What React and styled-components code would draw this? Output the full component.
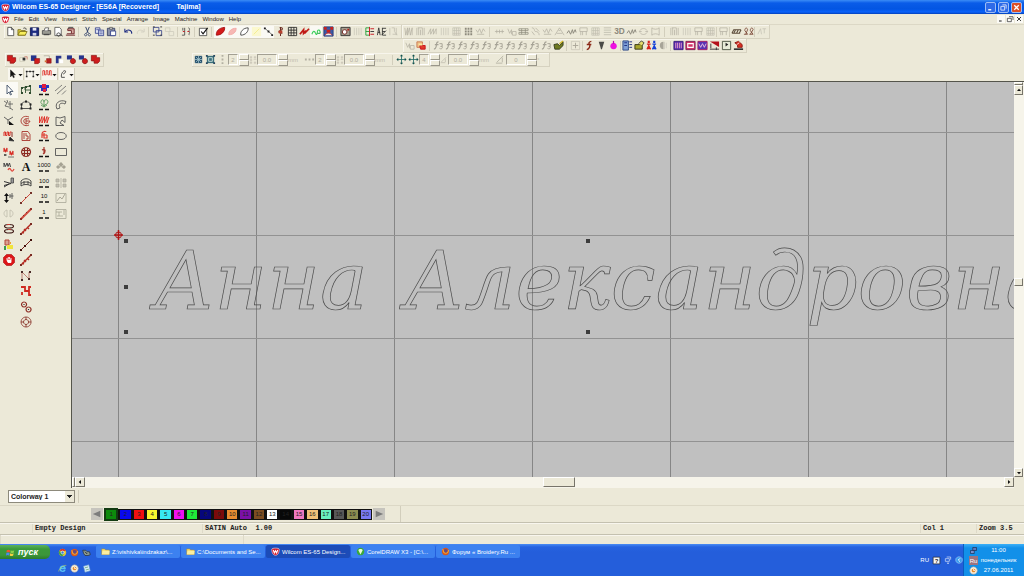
import React from 'react'
import styled, { createGlobalStyle } from 'styled-components'

const GlobalStyle = createGlobalStyle`
    * {
        box-sizing: border-box;
    }
    body {
        margin: 0;
        font-family: "Liberation Sans", sans-serif;
        font-size: 6px;
        color: #222;
    }
    button, input, select {
        font: inherit;
        color: inherit;
        margin: 0;
        padding: 0;
        border: 0;
        background: none;
    }
`

const G = '#b3b0a2'
const D = '#333'
const R = '#c8141c'
const N = '#1c2a80'

// every entry is [path, stroke, fill, stroke width] or { t } for a caption
const art = {
    new: [['M3 1.5h4l2.5 2.500v6.500h-6.500z', D, '#fff', 0.8], ['M7 1.500v2.500h2.500', D, 'none', 0.8]],
    open: [['M1 10V4h3l1 1h4v5z', '#6d6210', '#d9c93a', 0.8], ['M1 10l2-4h8l-2 4z', '#6d6210', '#f7ee5a', 0.8], ['M7 2.500c2-1 3 0 3 1.500', D]],
    save: [['M1.500 2h9v8.500h-9z', '#111a55', '#1c2a80'], ['M4 2h4v3H4z', 'none', '#e8e8f4'], ['M4 7.500h4v3H4z', 'none', '#cfd2e8']],
    print: [['M1.500 5h9v4h-9z', '#555', '#9a9a92'], ['M3.500 5l1-3h4l-1 3', '#444', '#fff', 0.8], ['M3 9.500h6', D]],
    preview: [['M2 1.500h5l2 2v7H2z', '#444', '#fff', 0.8], ['M6 7.500a1.800 1.800 0 1 0 .1 0M8 9l2.500 2', D]],
    machine: [['M1 10h10M2 8.500h8V3H3v2h4v3', '#6b1f24', '#d8a9a0'], ['M4 3V1.500h5', '#444']],
    cut: [['M4 1l3 7M8 1L5 8', '#283a66'], ['M4 8.200a1.300 1.300 0 1 0 .1 0M8 8.200a1.300 1.300 0 1 0 .1 0', '#283a66', 'none', 0.9]],
    copy: [['M1.500 2h5v6h-5z', N, '#dfe3f4', 0.8], ['M5 4.500h5.500v6H5z', N, '#dfe3f4', 0.8], ['M2.500 4h3M6 6.500h3.500M6 8.500h3.500', N, 'none', 0.7]],
    paste: [['M1.500 2.500h8v8h-8z', '#3d4668', '#8a90a8'], ['M4 1.500h3v2H4z', D, '#ddd', 0.6], ['M5 5.500h5.500v5H5z', N, '#fff', 0.8]],
    undo: [['M2 3v3.500h3.500M2.500 6C5 3.500 10 4 9.500 8.500', N, 'none', 1.100]],
    redo: [['M10 3v3.500H6.500M9.500 6C7 3.500 2 4 2.500 8.500', '#d2cfc1']],
    group: [['M1.500 1.500h6v5h-6zM4.500 5h6v5.500h-6z', '#33408a', 'none', 0.9], ['M1 1h2M9 10h2M9 1h2M1 10h2', D]],
    ungroup: [['M1.500 2h5v4h-5zM5.500 6h5v4.500h-5z', '#cfccbd', 'none', 0.9]],
    props: [['M2 2v3M4 2v8M8 2c3 1 0 3 1 4s-1 3 0 4M1 10h3', '#444', 'none', 0.9], ['M2 6h2M7 6h2', R]],
    check: [['M1.500 2.500h8v8h-8z', D, '#fff', 0.8], ['M3.500 6l2 2.500L10.500 2', '#111', 'none', 1.300]],
    leafRed: [['M1.500 10C1 6 4 2 10.500 1.500 11 6 7 10 1.500 10z', '#a30f12', '#d41a1a']],
    leafPink: [['M2 9.500C1.500 6 4.500 2.500 10 2.500 10 6.500 7 9.500 2 9.500z', '#f2a7a4', '#f6b8b4']],
    leafWhite: [['M2 10C1 6.500 4.500 2 10 2c.5 4-3 8-8 8z', D, '#fff', 0.9]],
    yellow: [['M1 1h10v10H1z', 'none', '#fbf8cf'], ['M3 9l6-6', '#f3ec8c']],
    node: [['M2 2.500l8 7', '#444', 'none', 0.8], ['M1 1.500h2v2H1zM5 5h2v2H5zM9 9h2v2H9z', 'none', '#222']],
    needle: [['M5 2c4-1 4 2 1 3s-2 3 2 3M6 1v10', '#6b2a20', 'none', 1.100], ['M4 5h4v3H4z', 'none', '#b9412f']],
    grid: [['M1.500 1.500h9v9h-9zM1.500 4.500h9M1.500 7.500h9M4.500 1.500v9M7.500 1.500v9', '#222', 'none', 0.9]],
    stitchRed: [['M1 9l4-5v4l3-3M6 8l5-5', '#c01a16', 'none', 1.900]],
    green: [['M1 9c1-4 3-4 4-1s2 0 2-2 3-3 3 2', '#3cd05c', 'none', 1.200], ['M7 8h3', '#1f9a3a']],
    photo: [['M1 1h10v10H1z', '#27397a', '#3a5ba8'], ['M1 1h3v3H1zM8 1h3v3H8zM4 4h4v3H4z', 'none', '#c9201c'], ['M2 10c2-3 6-3 8 0', '#c9201c', '#eee']],
    image: [['M1 1.500h10v9H1z', D, '#a49d8e'], ['M5 4a2.500 2.500 0 1 0 .1 0', '#701b18', '#fff'], ['M8 3h2v2H8z', 'none', '#b3201c']],
    bars: [['M2.500 2v8M5 2v8M7.500 2v8M10 2v8', '#cbc8ba', 'none', 0.9]],
    tree: [['M2 2h4M2 6h4M2 10h4M2 2v8', '#28a03a'], ['M6 1v10M7 3h4M7 9h4', R], ['M7 6h4', D]],
    aa: [['M1.500 10L3 2l1.500 8M2 7h2.500M7 2v8M7 2.500h4M7 6h3M6 10l5-5M7 10h4', '#2b2b2b', 'none', 0.9]],
    dim: [['M2 2v8M4 2h3v4M9 2v8M5 9h5M7 6l3 4', '#c4c1b3', 'none', 0.9]],
    h1: [['M2 2l1 8 2-8v8l2-8 1 8 2-8v8', G, 'none', 0.8]],
    h2: [['M2 2v8M4 2v8M6 4v6M8 2v8M10 2v8M3 2h5', G, 'none', 0.8]],
    h3: [['M1 9l3-6v6l3-6v6l3-6v6', G, 'none', 0.8]],
    h4: [['M2 2h8v8H2zM4 2v8M6 2v8M8 2v8M2 5h8M2 8h8', '#c1beb0', 'none', 0.8]],
    h5: [['M2 2h2v2H2zM5 2h2v2H5zM8 2h2v2H8zM2 5h2v2H2zM5 5h2v2H5zM8 5h2v2H8zM2 8h2v2H2zM5 8h2v2H5zM8 8h2v2H8z', 'none', '#8c897c']],
    h6: [['M1 4l2 3 2-4 2 5 2-5 2 3M2 9h8', G, 'none', 0.8]],
    h7: [['M1 6h10M3 4v4M6 4v4M9 4v4', G, 'none', 0.8]],
    h8: [['M2 3l2 5 2-4v5M7 6h4v4H7z', G, 'none', 0.8]],
    h9: [['M1 3h10v2H1zM1 7h10v2H1zM4 3v6M8 3v6', '#8c897c', 'none', 0.8]],
    h10: [['M2 2c4 0 2 4 4 4s4 1 4 4M2 6l3 4M6 2l4 4', G, 'none', 0.8]],
    h11: [['M1 10l5-8 5 8M3 8h6M5 5h2', G, 'none', 0.8]],
    h12: [['M1 8l2-3 2 4 2-5 1 4 2-4 1 3', '#89867a', 'none', 1]],
    h13: [['M2 2h8v4H2zM3 6v4M5 6v4M9 6v4', G, 'none', 0.8]],
    h14: [['M2 2h8M2 4.500h8M2 7h8M2 9.500h8', G, 'none', 0.7]],
    h15: [['M2 5c2-3 6-3 8 0M2 7c2 3 6 3 8 0M1 6h3M8 6h3', G, 'none', 0.8]],
    h16: [['M2 2c2 2 6 2 8 0v8c-2-2-6-2-8 0z', G, 'none', 0.8]],
    threeD: [{ t: '3D', size: 9, fill: '#8c897c', bold: true }],
    loops: [['M1 8l2-4h8M3 8l2-4M6 8l2-4M9 8l2-4M1 8h9', '#5b4b3a', 'none', 1.100]],
    loops2: [['M1 9h4L2 5c0-4 3-3 3-1L3 9M7 9h4L8 5c0-4 3-3 3-1L8 9', '#76402f', 'none', 0.9]],
    ramp: [['M2 9l3-6 1 6M7 3h4M9 3v5', '#c4c1b3', 'none', 0.8]],
    tag: [['M1 2h6v6H1z', '#cb7a4e', '#f0c38c'], ['M4 6h6v4H5z', R, '#e23a2a'], ['M3 4h4v2H3z', 'none', '#fbeea0']],
    f: [['M6 2C3 2 4 5 3.500 7S3 10 1 10M2 5h4', '#a5a295', 'none', 1.200], ['M7 4h3v3H8M10 7c1 3-2 3-3 2', '#a5a295', 'none', 1]],
    brush: [['M1 5l4-1 2 2 4-4v4l-4 4H2z', '#2c3318', '#6f7a22', 0.9], ['M7 4l4-3', '#d2b820', 'none', 1.300]],
    frame: [['M1.500 1.500h9v9h-9z', '#c4c1b3', 'none', 0.7], ['M3 6h6M6 3v6', '#aaa698']],
    fRed: [['M8 1.500C5 2 5 4 6 5s0 5-3 5.500M3 5h5', '#8b2a18', 'none', 1.600]],
    down: [['M3 2h6L6.500 10h-1z', 'none', '#4a4a46']],
    bomb: [['M6 3a3.600 3.600 0 1 0 .1 0', 'none', '#ee12e0'], ['M6 1v3', '#b010a8', 'none', 1.300]],
    list: [['M1 1h6v10H1z', '#2f4a86', '#7ea0d6'], ['M8 2h3M8 5h3M8 8h3M2.500 3h3M2.500 6h3', N]],
    olive: [['M1 5h8v5H1z', '#34330f', '#a8a52c'], ['M5 4l3-3 3 2-2 3', D, '#e6dd6a', 0.9]],
    people: [['M1 10l2-4 2 4M1 4.500h4M3 4v3M2.500 1.500h1v1h-1z', '#d8201c', '#d8201c', 1.300], ['M7 10l2-4 2 4M7 4.500h4M9 4v3M8.500 1.500h1v1h-1z', '#1440d8', '#1440d8', 1.300]],
    half: [['M6 2a4 4 0 0 0 0 8z', 'none', '#a7a497'], ['M7 2v8M9 3v6', '#cfccbd']],
    hoopA: [['M1 1.500h10v9H1z', '#3a1f7c', '#5b2ab0'], ['M3 3v6M5 3v6M7 3v6M9 3v6', '#e9a2c6']],
    hoopB: [['M1 1.500h10v9H1z', '#7c1f54', '#d13468'], ['M3 4h6v4H3z', '#fff', 'none', 1.200]],
    hoopC: [['M1 1.500h10v9H1z', '#a61e64', '#5a34b4'], ['M2 4l2 4 2-4 2 4 2-4', '#e9c3e0']],
    corner: [['M1 1.500h10v6z', 'none', '#b5111a'], ['M1 10h10M2 4v5M8 8v3', D]],
    play: [['M1.500 1.500h9v9h-9z', '#3c4434', '#e8ecd8', 0.9], ['M5 3l3 2-3 2z', 'none', '#222']],
    emb: [['M2 3l4-1.500L10 5v3H5V5.500z', '#8c1612', '#d83022'], ['M4 5l3-2', '#fff', 'none', 0.8], ['M1 10h10', D, 'none', 1.800]],
    weldR: [['M1.500 1.500h5.500v2.500h3.500v4l-2 2h-4v-2.500h-3z', '#8e1010', '#cf1d1d', 0.8]],
    weldS: [['M2 4h5v4H2z', '#bdb9a6', '#f4f1e2', 0.6], ['M5 4h3v3H5z', 'none', '#333'], ['M7 3h3v3', '#c05a4a', 'none', 0.7]],
    weldB: [['M1 1.500h6v6H1z', 'none', '#26348c'], ['M5 5h5.500v4l-1.500 1.500H5z', '#871212', '#cf1d1d', 0.6]],
    weldE: [['M2 2h6v6', '#9a9586', '#f5f1e4', 0.7], ['M5 5h5v5H5z', '#871212', '#b52020', 0.6], ['M3 7h2v2H3z', 'none', '#d96a30']],
    weldC: [['M2 2h6v3H5v5H2z', 'none', '#26348c'], ['M6 6h4v4H6z', 'none', '#fff']],
    weldF: [['M1 1.500h5.500v4.500H1z', 'none', '#26348c'], ['M7.500 5a2.800 2.800 0 1 0 .1 0', '#871212', '#cf1d1d', 0.8]],
    snap: [['M2 2h8v8H2z', 'none', '#2b5570'], ['M2 6h8M6 2v8M3 3l6 6M9 3L3 9', '#a7c8d0', 'none', 0.8]],
    snap2: [['M2 2h8v8H2z', 'none', '#3a6f7a'], ['M4 4h4v4H4z', '#d9e8e4', 'none', 0.9], ['M1 1h2v2H1zM9 9h2v2H9zM9 1h2v2H9zM1 9h2v2H1z', 'none', '#25445e']],
    move: [['M6 2v8M2 6h8', '#1f6a66', 'none', 0.9], ['M6 .5l1.800 2H4.200zM6 11.500l1.800-2H4.200zM.5 6l2-1.800v3.600zM11.500 6l-2-1.800v3.600z', 'none', '#14504e']],
    dotsV: [['M5 1h2v2H5zM5 5h2v2H5zM5 9h2v2H5z', 'none', '#b3b0a2']],
    dotsH: [['M1 5h2v2H1zM5 5h2v2H5zM9 5h2v2H9z', 'none', '#b3b0a2']],
    dotsX: [['M2 1h2v2H2zM8 1h2v2H8zM2 5h2v2H2zM7 5h4M2 9h2v2H2zM8 9h2v2H8z', '#b3b0a2', 'none', 0.7]],
    angle: [['M1 10h7M2 9l7-7M8 4v5', '#b3b0a2', 'none', 0.9]],
    arrow: [['M3 1v8.500l2-2 1.500 3 1.200-.6L6.300 7H9z', '#111', '#111', 0.5]],
    nodes: [['M2 9V3h8v6', '#444', 'none', 0.8], ['M1 2h2v2H1zM5 2h2v2H5zM9 2h2v2H9zM1 8h2v2H1zM9 8h2v2H9z', 'none', '#222']],
    coil: [['M1 8V2h2v5h2V2h2v5h2V2h2v6', '#de3a32', 'none', 1.100]],
    pen: [['M3 10c-1-4 2-8 4-8s0 4-2 4M3 10h4', '#333', 'none', 1]],
    // design tools
    select: [['M4 1v9l2-2 1.500 3 1-.5L7 7.500h3z', '#44546a', '#fff', 0.9]],
    lasso: [['M1 2l3 2-2 3 4 1M7 2v8M5 5h5M7 9l3 2M4 1l1 3', '#555', 'none', 0.8]],
    split: [['M1 2l4 3 5-3M5 5v4', '#555', 'none', 0.9], ['M6 6l5 4H6z', 'none', '#111']],
    stitchSel: [['M1 6V2h1.500v3.500H4V2h1.500v3.500H7V2h1.500', '#d83028', 'none', 1], ['M7 7l1 1 3 3-5-.5z', D, '#222', 0.8], ['M9 2v5', '#8a2a22']],
    wv: [['M1 6V2l1.500 3.500L4 2v4M7 9V5l1.500 3.500L10 5v4', '#d83028', 'none', 1.100], ['M1 9h3M5 11h6', '#555', 'none', 0.8], ['M2 8v2', '#111']],
    wAbc: [['M1 6V2l1.500 3.500L4 2l1 3.500L6.500 2 7.500 6', '#444', 'none', 1], ['M5 9c1-2 2-2 3 0s2 1 3-1', '#e0483c', 'none', 1.300]],
    spray: [['M1 8.500l7-2-7-2M1 10l5-3', D, 'none', 1], ['M8 1h2.500v5H8z', '#444', '#999', 0.8]],
    swap: [['M3.500 2v8', '#111', 'none', 1.400], ['M1 4l2.500-3L6 4zM1 8l2.500 3L6 8z', 'none', '#111'], ['M7 2v4M9 1v6M6.500 4h4', '#555', 'none', 0.9]],
    mirror: [['M4 2C0 3 0 8 4 9zM7 2c4 1 4 6 0 7z', '#c3c0b0', 'none', 0.9]],
    rings: [['M6 1.500c6 0 6 3.500 0 3.500s-6-3.500 0-3.500M6 6.500c6 0 6 3.500 0 3.500s-6-3.500 0-3.500', '#3b1512', 'none', 1.100], ['M4 1.500l3 0M5 6.500h3', '#c03a30', 'none', 1]],
    fig: [['M2 1h4v5H2z', '#b5443a', '#d9a090'], ['M4 6h6v4H4z', 'none', '#f0e43a'], ['M1 7h2v4H1z', 'none', '#3c9a4c'], ['M7 3h1v2H7z', 'none', '#f0a030']],
    stop: [['M3.500 .5h5l3 3v5l-3 3h-5l-3-3v-5z', '#a80d10', '#dd1518', 0.6], ['M4 6V4M5.300 5V3M6.600 5V3M8 6V4M4 6h4v2.500H5z', '#fff', '#fff', 0.9]],
    reshapeA: [['M1.500 9V4l4-1v6M5.500 6h5V2L5 3v3M10.500 6v4', '#345534', 'none', 0.9], ['M1 3h2v2H1zM5 2h2v2H5zM9 1h2v2H9zM1 8h2v2H1zM9 8h2v2H9z', 'none', '#2d4a2d']],
    reshapeB: [['M1.500 9.500V5C3 2 9 2 10.500 5v4.500z', '#444', 'none', 0.9], ['M.5 4.500h2v2h-2zM5 1.500h2v2H5zM9.500 4.500h2v2h-2zM.5 8.500h2v2h-2zM9.500 8.500h2v2h-2z', 'none', '#222']],
    spiral: [['M9 2C4 0 1 3 1 6s4 6 8 4M9 4c-3-1-6 0-5 3s5 2 6-1H6M6 4v5', '#a8342c', 'none', 0.9]],
    colB: [['M2 1.500h6l2 3v6H2zM4 3v6M6 3v3h2v3H6', '#a8342c', 'none', 0.9]],
    globe: [['M6 1.500a4.500 4.500 0 1 0 .1 0M1.500 4.500h9M1.500 7.500h9M4.500 2v8M7.500 2v8', '#8c2a22', 'none', 1.200]],
    letter: [{ t: 'A', size: 12, fill: '#111', bold: true, serif: true, y: 10 }],
    bridge: [['M1 9V4c3-3 7-3 10 0v5M1 6.500c3-2 7-2 10 0M1 9c3-2 7-2 10 0M4 4v4M8 4v4', '#3a3a3a', 'none', 0.9]],
    run1: [['M1 11L11 1', '#cf4a3e', 'none', 1], ['M0 10h2v2H0zM5 5h1v1H5zM10 0h2v2h-2z', 'none', '#743028']],
    run2: [['M1 11L11 1', '#cf4a3e', 'none', 1.900], ['M0 10h2v2H0zM3 7h1v1H3zM6 4h1v1H6zM10 0h2v2h-2z', 'none', '#8a3028']],
    run3: [['M1 11L11 1M2 9l2 1M4 6l2 2M7 4l2 2', '#b3281f', 'none', 1.400], ['M0 10h2v2H0zM10 0h2v2h-2z', 'none', '#7a2a22']],
    run4: [['M1 11L11 1', '#7a241c', 'none', 1], ['M0 10h2v2H0zM4 6h2v2H4zM10 0h2v2h-2z', 'none', '#43100c']],
    nA: [['M2 10V2l7 7V2', '#b5665c', 'none', 0.8], ['M1 1h2v2H1zM1 9h2v2H1zM8 8h2v2H8zM9 1h2v2H9z', 'none', '#4a2a26']],
    nB: [['M1 2h4v4h4V2h2M2 10V7M9 6v4h2', '#cf2a20', 'none', 1.800]],
    gears: [['M4 1a2.500 2.500 0 1 0 .1 0M8.500 6a2.500 2.500 0 1 0 .1 0', '#8c2a22', 'none', 1.200], ['M4 3v1M8.500 8v1', '#333', 'none', 1.200]],
    target: [['M6 1a5 5 0 1 0 .1 0M6 3.500a2.500 2.500 0 1 0 .1 0M6 1v3M6 8v3M1 6h3M8 6h3', '#8c3a30', 'none', 0.9]],
    flower: [['M1 1h3v3H1zM8 1h3v3H8z', 'none', '#1c3cc8'], ['M4 0h4v4H4z', 'none', '#e01c3c'], ['M3 4h6v3H3z', 'none', '#3c2ab8'], ['M5 5h3v3H5z', 'none', '#e0263c'], ['M1 10.500h4M7 10.500h4', '#111', 'none', 1.500]],
    flowerG: [['M3 3c0-3 3-3 3 0 0-3 4-3 4 0s-4 2-4 4c0-2-4-2-3-4zM6 3v5M3 6l3 2 3-2', '#5a9a5c', 'none', 0.9], ['M1 10.500h4M7 10.500h4', '#111', 'none', 1.500]],
    coilB: [['M1.500 8V1.500M4 8V1.500M6.500 8V1.500M9 8V1.500M1.500 8L4 1.500M4 8l2.500-6.500M6.500 8L9 1.500M9 8l2-6', '#de2a22', 'none', 0.9], ['M1 10.500h4M7 10.500h4', '#111', 'none', 1.500]],
    redS: [['M4 8V4c0-3 4-3 4-2M4 5h5M6 3v5h3V5', '#dc3a30', 'none', 1.200], ['M1 10.500h4M7 10.500h4', '#111', 'none', 1.500]],
    thread: [['M6 1v7M4 4c4-2 4 2 1 4', '#a8342c', 'none', 1.200], ['M1 10.500h4M7 10.500h4', '#111', 'none', 1.500]],
    n1000: [{ t: '1000', size: 6, fill: '#111', y: 6 }, ['M1 10h4M7 10h4', '#111', 'none', 1.500]],
    n100: [{ t: '100', size: 6, fill: '#111', y: 6 }, ['M1 10h4M7 10h4', '#111', 'none', 1.500]],
    n10: [{ t: '10', size: 6, fill: '#111', y: 6 }, ['M1 10h4M7 10h4', '#111', 'none', 1.500]],
    n1: [{ t: '1', size: 6, fill: '#111', y: 6 }, ['M1 10h4M7 10h4', '#111', 'none', 1.500]],
    lines: [['M0 7l7-6M2 10l9-8M7 10.500l4-4', '#666', 'none', 0.8]],
    arc: [['M2 10C-1 4 5 0 11 2.500L10 5C6 3 3 5 5 9z', '#555', 'none', 0.9]],
    poly: [['M1 2l4 1 5-1.500v6L7 5 5 8l4 2.500H1z', '#555', 'none', 0.9]],
    ellipse: [['M6 2.500c7 0 7 7 0 7s-7-7 0-7', '#555', 'none', 0.9]],
    rect: [['M.5 2.500h11v7H.5z', '#555', 'none', 0.9]],
    club: [['M6 1l2.500 2.500L6 6 3.500 3.500zM3 4l2.500 2L3 8 1 6zM9 4l2 2-2 2-2.500-2z', 'none', '#a5a293'], ['M2 10h8', '#b5b2a4']],
    dist: [['M1 2h3v3H1zM8 2h3v3H8zM1 7h3v3H1zM8 7h3v3H8zM6 1v10', '#aaa798', '#c4c1b3', 0.7]],
    wave: [['M1 1.500h10v9H1z', '#aaa798', 'none', 0.8], ['M2 9l3-4 2 2 3-5', '#aaa798', 'none', 1]],
    maze: [['M1 1.500h10v9H1zM1 4h6M4 4v4h4M9 2v5M2 8h2', '#aaa798', 'none', 0.8]],
    // shell icons
    logo: [['M1 3c0-2 10-2 10 0 0 5-2 8-5 8S1 8 1 3z', '#fff', '#d8182a', 0.7], ['M3 4l1.500 4L6 5l1.500 3L9 4', '#fff', 'none', 1.400]],
    flag: [['M1 3c2-1 3-1 4.500 0L5 6C3.500 5 2 5 .6 6z', 'none', '#f0562a'], ['M6.300 3C8 4 9 4 11 3l-.6 3C9 7 7.500 7 5.800 6z', 'none', '#8cd04a'], ['M.5 6.800c1.500-1 3-1 4.300 0L4 10C3 9 1.500 9 0 10z', 'none', '#4a8af0'], ['M5.600 7c1.600 1 3 1 4.700 0l-.8 3C8 11 6.500 11 4.900 10z', 'none', '#f8d040']],
    chrome: [['M6 1a5 5 0 1 0 .1 0', 'none', '#e4c430'], ['M1.700 3.500A5 5 0 0 1 10.500 4H6z', 'none', '#d8352a'], ['M1.500 4A5 5 0 0 0 6 11l2-4-3-1z', 'none', '#3fa04a'], ['M6 4a2 2 0 1 0 .1 0', '#fff', '#3a78d8', 0.9]],
    firefox: [['M6 1a5 5 0 1 0 .1 0', 'none', '#d8561c'], ['M6 2.500a3 3 0 1 0 .1 0', 'none', '#6a4a7a'], ['M2 3c2 1 0 4 3 5s5-1 5-4', '#f4a030', 'none', 1.500]],
    bird: [['M1 3h4l2 2h3l1 4-3 1H4L2 7z', '#2a333c', '#8b9a92'], ['M4 5l3 3', '#222', 'none', 1.200]],
    ie: [['M9.500 8C7 11 2.500 10 3 6s6-4 6.500 0H3.500', '#56c0f4', 'none', 1.700], ['M1 10C1 6 8 1 11 2', '#cfe04a', 'none', 0.8]],
    clock: [['M6 1a5 5 0 1 0 .1 0', '#9aa0a4', '#f6eedc', 0.8], ['M6 3.500a2.500 2.500 0 1 0 .1 0', 'none', '#e88a28'], ['M6 4v2h2', '#fff', 'none', 1]],
    desktop: [['M2 3l7-2 2 8-7 2z', '#6c9ccc', '#d8ecfa', 0.8], ['M4 5l4-1M5 8l4-1', '#58a068', 'none', 1]],
    folder: [['M1 10V2.500h4l1 1.500h5v6z', '#b48a28', '#f6dc6a', 0.7], ['M1 10l1-5h9.500l-.5 5z', 'none', '#fbeea0']],
    corel: [['M6 1a5 5 0 1 0 .1 0', 'none', '#39a838'], ['M6 10L3 4c1-2 5-2 6 0z', 'none', '#e8f8d8']],
    help: [['M1.500 1.500h9v9h-9z', '#222', '#f6f6f6', 0.9], { t: '?', size: 8, fill: '#222', bold: true }],
    restoreS: [['M4 1.500h6v4M2 4h6v4H2z', '#dfe9fb', 'none', 1], ['M4 10h4l-2 2z', 'none', '#fff']],
    chevron: [['M6 1a5 5 0 1 0 .1 0', '#bfe0fb', '#3c9cf0', 0.7], ['M7.500 3.500L5 6l2.500 2.500', '#fff', 'none', 1.400]],
    net: [['M5 2h5v4H5z', '#182040', '#5a78c0', 0.8], ['M2 6h5v4H2z', '#182040', '#7a90d0', 0.8]],
    ru: [['M0 0h12v12H0z', 'none', '#9d7480'], { t: 'Ru', size: 8, fill: '#fff' }],
    min: [['M3 9h4', '#fff', 'none', 1.800]],
    restore: [['M4.500 2.500h5v5M2.500 4.500h5v5h-5z', '#e9effd', 'none', 1.100]],
    close: [['M3 3l6 6M9 3L3 9', '#fff', 'none', 1.700]],
    minD: [['M3 9h4', '#222', 'none', 1.500]],
    restoreD: [['M4.500 2.500h6v5M2 5h6v5H2z', '#333', 'none', 1.100]],
    closeD: [['M3 3l6 6M9 3L3 9', '#222', 'none', 1.300]],
    triL: [['M7.500 3v6L4 6z', 'none', '#111']],
    triR: [['M4.500 3v6L8 6z', 'none', '#111']],
    triU: [['M3 7.500h6L6 4z', 'none', '#111']],
    triD: [['M3 4.500h6L6 8z', 'none', '#111']],
    drop: [['M1 5h10L6 10z', 'none', '#111']],
    prev: [['M10 2v8L1 6z', 'none', '#7c7c7c']],
    next: [['M2 2v8l9-4z', 'none', '#7c7c7c']],
}

const Svg = styled.svg`
    display: block;
    flex: none;
    overflow: visible;
    width: ${p => p.$size}px;
    height: ${p => p.$size}px;
`

const Glyph = ({ name, size = 11 }) => (
    <Svg viewBox="0 0 12 12" $size={size} aria-hidden="true">
        {art[name].map((a, i) => a.t
            ? <text key={i} x="6" y={a.y || 9} textAnchor="middle" fontSize={a.size} fill={a.fill}
                fontWeight={a.bold ? 700 : 400} fontFamily={a.serif ? 'Liberation Serif, serif' : 'Liberation Sans, sans-serif'}>{a.t}</text>
            : <path key={i} d={a[0]} stroke={a[1]} fill={a[2] || 'none'} strokeWidth={a[3] || 1} />)}
    </Svg>
)

const Page = styled.div`
    display: flex;
    flex-direction: column;
    height: 100vh;
    overflow: hidden;
    background: #ece9d8;
`

const TitleBar = styled.header`
    display: flex;
    align-items: center;
    gap: 2px;
    height: 14px;
    padding: 0 2px 0 1px;
    background: linear-gradient(#3b8cf6 0, #0a5ce8 3px, #0355e2 9px, #0a62fb 12px, #0440b8 14px);
    color: #fff;
`

const Title = styled.h1`
    flex: 1;
    margin: 0;
    font-size: 7px;
    line-height: 10px;
    white-space: pre;
`

const WinButton = styled.button`
    display: grid;
    place-items: center;
    width: 11px;
    height: 11px;
    border: 1px solid #9dbdf5;
    border-radius: 2px;
    background: ${p => (p.$close ? '#dd4f26' : '#2f6be8')};
`

const MenuBar = styled.nav`
    display: flex;
    align-items: center;
    height: 11px;
    padding: 0 1px;
    border-bottom: 1px solid #dcd8c6;
`

const Menus = styled.div`
    display: flex;
    gap: 5px;
    padding-left: 4px;
`

const MenuItem = styled.button`
    line-height: 8px;
`

const MdiButtons = styled.div`
    display: flex;
    gap: 1px;
    margin-left: auto;

    button {
        background: #fbfaf5;
    }
`

const Row = styled.div`
    display: flex;
    align-items: center;
    height: ${p => p.$h}px;
    padding-left: ${p => p.$left || 4}px;
    gap: ${p => p.$gap || 0}px;
`

const Band = styled.div`
    display: flex;
    align-items: center;
    height: 14px;
    padding-right: 2px;
    border: solid #d6d2c0;
    border-width: 0 1px 1px 0;
    box-shadow: inset 1px 1px #f7f5ec;
`

const Tool = styled.button`
    display: grid;
    place-items: center;
    width: 12px;
    height: 12px;
    background: ${p => (p.$on ? '#faf9f4' : 'none')};
`

const Sep = styled.span`
    width: ${p => p.$w}px;
    height: 10px;
    background: linear-gradient(#d2cebc, #d2cebc) center / 1px 100% no-repeat;
`

const DropTool = styled.button`
    display: flex;
    align-items: center;
    justify-content: center;
    width: 16px;
    height: 12px;
    margin-right: 1px;
    border-right: 1px solid #d2cebc;
    background: #f8f6ee;
`

const Field = styled.input`
    width: ${p => p.$w}px;
    height: 11px;
    border: 1px solid #a3a093;
    border-right-color: #fff;
    border-bottom-color: #fff;
    color: #b0ad9f;
    text-align: center;
`

const Spin = styled.span`
    display: grid;
    grid-template-rows: 1fr 1fr;
    width: 10px;
    height: 12px;
    margin-left: 1px;

    button {
        border: 1px solid #fff;
        border-right-color: #9a978a;
        border-bottom-color: #9a978a;
    }
`

const Unit = styled.span`
    width: ${p => p.$w}px;
    color: #bdbaac;
    line-height: 8px;
`

const Work = styled.main`
    display: flex;
    flex: 1;
    min-height: 0;
`

const Palette = styled.aside`
    width: 71px;
    flex: none;
    padding: 1px 1px 0 0;
`

const PaletteGrid = styled.div`
    display: grid;
    grid-auto-flow: column;
    grid-template-columns: repeat(4, 1fr);
    grid-template-rows: repeat(16, 1fr);
    height: 248px;
`

const PaletteTool = styled.button`
    display: grid;
    place-items: center;
    background: ${p => (p.$on ? '#fbfaf5' : 'none')};
`

const Stage = styled.section`
    display: grid;
    grid-template-columns: 1fr 10px;
    grid-template-rows: 1fr 11px;
    flex: 1;
    min-width: 0;
    border-top: 1px solid #55554c;
    border-left: 1px solid #55554c;
`

const Canvas = styled.svg`
    display: block;
    width: 100%;
    height: 100%;
    min-width: 0;
    min-height: 0;
    background: #c0c0c0;
    overflow: hidden;
`

const Lettering = styled.text`
    font-family: "DejaVu Serif", serif;
    font-style: italic;
    font-size: 80px;
    fill: none;
    stroke: #4c4c4c;
    stroke-width: 0.7px;
`

const Track = styled.div`
    display: flex;
    flex-direction: ${p => (p.$vertical ? 'column' : 'row')};
    background: #f6f4ea;
`

const Raised = styled.button`
    display: grid;
    place-items: center;
    width: ${p => p.$w}px;
    height: ${p => p.$h}px;
    border: 1px solid #fff;
    border-right-color: #77746a;
    border-bottom-color: #77746a;
    background: #ece9d8;
`

const Room = styled.span`
    flex: ${p => p.$grow};
`

const ColorwayRow = styled.div`
    display: flex;
    align-items: center;
    height: 18px;
    padding-left: 8px;
    border-bottom: 1px solid #dcd8c6;
`

const ColorwayBox = styled.div`
    padding-right: 3px;
    border-right: 1px solid #d2cebc;
`

const Select = styled.select`
    display: block;
    width: 67px;
    height: 13px;
    padding-left: 2px;
    appearance: none;
    border: 1px solid #8d8a7c;
    font-size: 7px;
    font-weight: 700;
    background:
        conic-gradient(from -45deg at 50% 100%, #222 90deg, transparent 0) right 2px center / 5px 3px no-repeat,
        linear-gradient(#ece9d8, #ece9d8) right / 9px 100% no-repeat,
        #fff;
`

const ColorBar = styled.div`
    display: flex;
    align-items: center;
    width: 401px;
    height: 16px;
    padding-left: 91px;
    gap: 1px;
    border-right: 1px solid #d2cebc;
`

const Arrow = styled.button`
    display: grid;
    place-items: center;
    width: 12px;
    height: 12px;
    background: #c6c4bd;
`

const Chips = styled.div`
    display: flex;
    align-items: center;
    width: 268px;
`

const Chip = styled.button`
    flex: 1;
    height: ${p => (p.$active ? 13 : 11)}px;
    border: 1px solid #111;
    border-width: ${p => (p.$active ? '2px' : '1px 1px 1px 2px')};
    border-color: ${p => (p.$active ? '#123c12' : '#111')};
    background: ${p => p.$color};
    line-height: 8px;
    text-align: center;
`

const Status = styled.div`
    display: flex;
    align-items: center;
    height: ${p => p.$h}px;
    border-top: 1px solid #c4c1b0;
    box-shadow: inset 0 1px #f8f6ee;
    font-family: "Liberation Mono", monospace;
    font-size: 7px;
    font-weight: 700;
    line-height: 9px;
    white-space: pre;
`

const StatusCell = styled.span`
    flex: ${p => (p.$w ? 'none' : 1)};
    width: ${p => (p.$w ? p.$w + 'px' : 'auto')};
    padding-left: 2px;
    border-left: 1px solid #dedac9;
`

const Taskbar = styled.footer`
    display: flex;
    height: 32px;
    background: linear-gradient(#4a8cf4 0, #2663e0 3px, #245edb 8px);
    color: #fff;
`

const Start = styled.button`
    display: flex;
    align-items: center;
    gap: 3px;
    width: 50px;
    height: 14px;
    margin-top: 1px;
    padding-left: 6px;
    border-radius: 0 5px 5px 0;
    background: linear-gradient(#5eb15e, #3a9a3a 4px, #3c963a 10px, #2c7a2c);
    font-size: 9px;
    font-style: italic;
    font-weight: 700;
    color: #fff;
`

const Quick = styled.div`
    display: grid;
    grid-template-columns: repeat(3, 12px);
    place-items: center;
    height: 32px;
    margin: 0 4px 0 6px;
`

const Task = styled.button`
    display: flex;
    align-items: center;
    gap: 2px;
    flex: 0 1 84px;
    height: 13px;
    margin: 1px 1px 0 0;
    padding-left: 5px;
    border-radius: 2px;
    background: ${p => (p.$active ? '#1c4cb8' : '#3c81f0')};
    white-space: nowrap;
`

const TrayLeft = styled.div`
    display: flex;
    align-items: center;
    gap: 3px;
    margin-left: auto;
`

const Tray = styled.div`
    display: grid;
    grid-template-columns: 12px 1fr;
    grid-template-rows: repeat(3, 10px);
    place-items: center;
    width: 61px;
    padding: 1px 6px 0 3px;
    border-left: 1px solid #0b5cc0;
    background: linear-gradient(#3cb0f8, #1290e9 4px);
    line-height: 8px;
`

const row1 = [
    'new', 'open', 'save', 'print', 'preview', 'machine', 5, 'cut', 'copy', 'paste', 5, 'undo', 'redo', 5,
    'group', 'ungroup', 5, 'props', 5, 'check', 5, 'leafRed*', 'leafPink*', 'leafWhite*', 'yellow*', 'node*',
    'needle', 'grid', 'stitchRed', 'green*', 'photo', 5, 'image', 'bars', 'tree', 'aa', 'dim',
]
const row1b = [
    'h1', 'h2', 'h3', 'bars', 'h4', 'h5', 'h6', 7, 'h7', 'h8', 'h9', 'h10', 'h6', 'h11', 'h12', 'h13', 'h4',
    'h14', 'threeD', 'h12', 'h15', 'h16', 7, 'h2', 'bars', 'h13', 'h4', 1, 'h13', 1, 'loops', 'loops2', 1, 'ramp',
]
const row2 = [
    'h8', 'tag', 5, 'f', 'f', 'f', 'f', 'f', 'f', 'f', 'f', 'f', 'f', 'brush', 5, 'frame', 2, 'fRed', 'down', 'bomb', 2,
    'list', 'olive', 'people', 'half', 3, 'hoopA', 'hoopB', 'hoopC', 'corner', 'play', 'emb',
]
const row3 = ['weldR', 'weldS', 'weldB', 'weldE', 'weldC', 'weldF', 'weldF', 'weldR']

const palette = [
    ['select', 'lasso', 'split', 'stitchSel', 'wv', 'wAbc', 'spray', 'swap', 'mirror', 'rings', 'fig', 'stop'],
    ['reshapeA', 'reshapeB', 'spiral', 'colB', 'globe', 'letter', 'bridge', 'run1', 'run2', 'run3', 'run4', 'run3', 'nA', 'nB', 'gears', 'target'],
    ['flower', 'flowerG', 'coilB', 'redS', 'thread', 'n1000', 'n100', 'n10', 'n1'],
    ['lines', 'arc', 'poly', 'ellipse', 'rect', 'club', 'dist', 'wave', 'maze'],
]

const chips = [
    '#0c8a0c', '#0808f0', '#f01010', '#f8f830', '#38e8f0', '#f010f0', '#20e838', '#06067c', '#7c0a0a', '#e88c30',
    '#7a10a8', '#7c4c20', '#ffffff', '#080808', '#f078c0', '#f0c078', '#68f0c0', '#585858', '#8c8c50', '#7878f0',
]

const menus = ['File', 'Edit', 'View', 'Insert', 'Stitch', 'Special', 'Arrange', 'Image', 'Machine', 'Window', 'Help']

const Tools = ({ items }) => items.map((item, i) => {
    if (typeof item === 'number') return <Sep key={i} $w={item} />
    const name = item.replace('*', '')
    return <Tool key={i} type="button" aria-label={name} $on={item !== name}><Glyph name={name} /></Tool>
})

const Stepper = ({ label, value, w }) => (
    <>
        <Field aria-label={label} defaultValue={value} $w={w} />
        <Spin>
            <button type="button" aria-label={label + ' up'} />
            <button type="button" aria-label={label + ' down'} />
        </Spin>
    </>
)

const gridX = Array.from({ length: 16 }, (_, i) => 46.5 + i * 138)
const gridY = Array.from({ length: 12 }, (_, i) => 50.5 + i * 103)
const handles = [[54, 159], [54, 205], [54, 250], [516, 159], [516, 250]]

const App = () => {
    return (
        <>
            <GlobalStyle />
            <Page>
                <TitleBar>
                    <Glyph name="logo" size={9} />
                    <Title>{'Wilcom ES-65 Designer - [ES6A [Recovered]         Tajima]'}</Title>
                    <WinButton type="button" aria-label="Minimize"><Glyph name="min" size={9} /></WinButton>
                    <WinButton type="button" aria-label="Restore"><Glyph name="restore" size={9} /></WinButton>
                    <WinButton type="button" aria-label="Close" $close><Glyph name="close" size={9} /></WinButton>
                </TitleBar>

                <MenuBar>
                    <Glyph name="logo" size={9} />
                    <Menus>
                        {menus.map(m => <MenuItem key={m} type="button">{m}</MenuItem>)}
                    </Menus>
                    <MdiButtons>
                        <button type="button" aria-label="Minimize design"><Glyph name="minD" size={8} /></button>
                        <button type="button" aria-label="Restore design"><Glyph name="restoreD" size={8} /></button>
                        <button type="button" aria-label="Close design"><Glyph name="closeD" size={8} /></button>
                    </MdiButtons>
                </MenuBar>

                <Row $h={14}>
                    <Band><Tools items={row1} /></Band>
                    <Band><Tools items={row1b} /></Band>
                </Row>
                <Row $h={14} $left={403}>
                    <Band><Tools items={row2} /></Band>
                </Row>
                <Row $h={14} $gap={88} $left={5}>
                    <Band><Tools items={row3} /></Band>
                    <Band>
                        <Tools items={['snap', 'snap2', 'dotsV']} />
                        <Stepper label="Rows" value="2" w={10} />
                        <Glyph name="dotsX" size={8} />
                        <Stepper label="Row spacing" value="0.0" w={20} />
                        <Unit $w={15}>mm</Unit>
                        <Tools items={['dotsH']} />
                        <Stepper label="Columns" value="2" w={10} />
                        <Glyph name="dotsX" size={8} />
                        <Stepper label="Column spacing" value="0.0" w={20} />
                        <Unit $w={15}>mm</Unit>
                        <Sep $w={5} />
                        <Tools items={['move', 'move']} />
                        <Stepper label="Copies" value="4" w={10} />
                        <Glyph name="angle" size={8} />
                        <Stepper label="Distance" value="0.0" w={20} />
                        <Unit $w={15}>mm</Unit>
                        <Tools items={['angle']} />
                        <Stepper label="Angle" value="0" w={20} />
                        <Unit $w={10}>°</Unit>
                    </Band>
                </Row>
                <Row $h={14} $left={8}>
                    {['arrow', 'nodes', 'coil', 'pen'].map(n => (
                        <DropTool key={n} type="button" aria-label={n}>
                            <Glyph name={n} size={10} />
                            <Glyph name="drop" size={5} />
                        </DropTool>
                    ))}
                </Row>

                <Work>
                    <Palette>
                        <PaletteGrid>
                            {palette.map((col, c) => Array.from({ length: 16 }, (_, r) => (
                                col[r]
                                    ? <PaletteTool key={c + '-' + r} type="button" aria-label={col[r]} $on={col[r] === 'select'}>
                                        <Glyph name={col[r]} size={12} />
                                    </PaletteTool>
                                    : <span key={c + '-' + r} />
                            )))}
                        </PaletteGrid>
                    </Palette>
                    <Stage>
                        <Canvas>
                            {gridX.map(x => <line key={x} x1={x} x2={x} y1="0" y2="100%" stroke="#868686" />)}
                            {gridY.map(y => <line key={y} x1="0" x2="100%" y1={y} y2={y} stroke="#929292" />)}
                            <Lettering x="82" y="227">Анна</Lettering>
                            <Lettering x="332" y="227">Александровна</Lettering>
                            {handles.map(([x, y]) => <rect key={x + '-' + y} x={x - 2} y={y - 2} width="4" height="4" fill="#3c3c3c" />)}
                            <circle cx="46.5" cy="153" r="3" fill="none" stroke="#b01414" />
                            <path d="M42 153h9M46.500 148v10" stroke="#b01414" strokeWidth="1.500" />
                        </Canvas>
                        <Track $vertical>
                            <Raised type="button" aria-label="Split view" $w={9} $h={3} />
                            <Raised type="button" aria-label="Scroll up" $w={9} $h={10}><Glyph name="triU" size={8} /></Raised>
                            <Room $grow={1} />
                            <Raised type="button" aria-label="Vertical position" $w={9} $h={8} />
                            <Room $grow={1} />
                            <Raised type="button" aria-label="Scroll down" $w={9} $h={9}><Glyph name="triD" size={8} /></Raised>
                        </Track>
                        <Track>
                            <Raised type="button" aria-label="Split columns" $w={3} $h={10} />
                            <Raised type="button" aria-label="Scroll left" $w={10} $h={10}><Glyph name="triL" size={8} /></Raised>
                            <Room $grow={458} />
                            <Raised type="button" aria-label="Horizontal position" $w={32} $h={10} />
                            <Room $grow={429} />
                            <Raised type="button" aria-label="Scroll right" $w={10} $h={10}><Glyph name="triR" size={8} /></Raised>
                        </Track>
                    </Stage>
                </Work>

                <ColorwayRow>
                    <ColorwayBox>
                        <Select aria-label="Colorway" defaultValue="1">
                            <option value="1">Colorway 1</option>
                        </Select>
                    </ColorwayBox>
                </ColorwayRow>
                <ColorBar>
                    <Arrow type="button" aria-label="Previous colors"><Glyph name="prev" size={10} /></Arrow>
                    <Chips>
                        {chips.map((c, i) => <Chip key={c} type="button" $color={c} $active={i === 0}>{i + 1}</Chip>)}
                    </Chips>
                    <Arrow type="button" aria-label="Next colors"><Glyph name="next" size={10} /></Arrow>
                </ColorBar>

                <Status $h={12}>
                    <StatusCell $w={32} />
                    <StatusCell $w={170}>Empty Design</StatusCell>
                    <StatusCell>SATIN Auto  1.00</StatusCell>
                    <StatusCell $w={56}>Col 1</StatusCell>
                    <StatusCell $w={48}>Zoom 3.5</StatusCell>
                </Status>
                <Status $h={10}>
                    <StatusCell $w={243}> </StatusCell>
                    <StatusCell> </StatusCell>
                </Status>

                <Taskbar>
                    <Start type="button"><Glyph name="flag" size={9} />пуск</Start>
                    <Quick>
                        {['chrome', 'firefox', 'bird', 'ie', 'clock', 'desktop'].map(n => <Glyph key={n} name={n} size={9} />)}
                    </Quick>
                    <Task type="button"><Glyph name="folder" size={9} />Z:\vishivka\indzakaz\...</Task>
                    <Task type="button"><Glyph name="folder" size={9} />C:\Documents and Se...</Task>
                    <Task type="button" $active><Glyph name="logo" size={9} />Wilcom ES-65 Design...</Task>
                    <Task type="button"><Glyph name="corel" size={9} />CorelDRAW X3 - [C:\...</Task>
                    <Task type="button"><Glyph name="firefox" size={9} />Форум « Broidery.Ru ...</Task>
                    <TrayLeft>
                        <span>RU</span>
                        <Glyph name="help" size={9} />
                        <Glyph name="restoreS" size={8} />
                        <Glyph name="chevron" size={8} />
                    </TrayLeft>
                    <Tray>
                        <Glyph name="net" size={9} /><span>11:00</span>
                        <Glyph name="ru" size={9} /><span>понедельник</span>
                        <Glyph name="clock" size={9} /><span>27.06.2011</span>
                    </Tray>
                </Taskbar>
            </Page>
        </>
    )
}

export default App
